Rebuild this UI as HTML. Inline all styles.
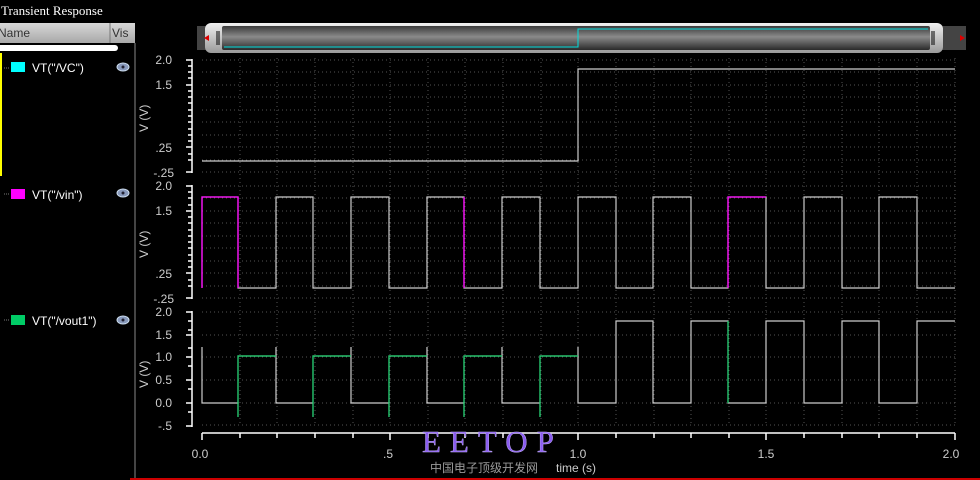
<!DOCTYPE html>
<html><head><style>
body{margin:0;background:#000;width:980px;height:480px;overflow:hidden;font-family:"Liberation Sans","Noto Sans CJK SC",sans-serif}
</style></head><body>
<svg width="980" height="480" xmlns="http://www.w3.org/2000/svg" style="position:absolute;left:0;top:0">
<defs>
<linearGradient id="hd" x1="0" y1="0" x2="0" y2="1"><stop offset="0" stop-color="#d8d8d8"/><stop offset="1" stop-color="#a8a8a8"/></linearGradient>
<linearGradient id="sb" x1="0" y1="0" x2="0" y2="1"><stop offset="0" stop-color="#3a3a3a"/><stop offset="0.45" stop-color="#8a8a8a"/><stop offset="1" stop-color="#2a2a2a"/></linearGradient>
<linearGradient id="sf" x1="0" y1="0" x2="0" y2="1"><stop offset="0" stop-color="#f0f0f0"/><stop offset="1" stop-color="#9a9a9a"/></linearGradient>
</defs>
<text x="1" y="15" fill="#fff" font-family="Liberation Serif,serif" font-size="13">Transient Response</text>
<rect x="0" y="23" width="135" height="20" fill="url(#hd)"/>
<line x1="110" y1="23" x2="110" y2="43" stroke="#777"/>
<text x="-2" y="37" fill="#333" font-size="12">Name</text>
<text x="112" y="37" fill="#333" font-size="12">Vis</text>
<rect x="-4" y="45" width="122" height="6" rx="3" fill="#fff"/>
<line x1="1" y1="53" x2="1" y2="176" stroke="#ff0" stroke-width="2"/>
<line x1="135" y1="43" x2="135" y2="480" stroke="#888"/>
<g font-size="12" fill="#fff">
<line x1="4" y1="68" x2="10" y2="68" stroke="#777" stroke-dasharray="1,1"/><rect x="11" y="62" width="14" height="10" fill="#0ff"/><text x="32" y="72">VT("/VC")</text>
<line x1="4" y1="194" x2="10" y2="194" stroke="#777" stroke-dasharray="1,1"/><rect x="11" y="189" width="14" height="10" fill="#f0f"/><text x="32" y="199">VT("/vin")</text>
<line x1="4" y1="320" x2="10" y2="320" stroke="#777" stroke-dasharray="1,1"/><rect x="11" y="315" width="14" height="10" fill="#0c6"/><text x="32" y="325">VT("/vout1")</text>
</g>
<g fill="#8899bb" stroke="#cde"><ellipse cx="123" cy="67" rx="6" ry="4"/><ellipse cx="123" cy="193" rx="6" ry="4"/><ellipse cx="123" cy="320" rx="6" ry="4"/></g>
<g fill="#223"><circle cx="123" cy="67" r="1.5"/><circle cx="123" cy="193" r="1.5"/><circle cx="123" cy="320" r="1.5"/></g>
<!-- scrollbar -->
<rect x="197" y="26" width="769" height="24" fill="#444"/>
<rect x="205" y="23" width="738" height="30" rx="6" fill="url(#sf)"/>
<rect x="222" y="26" width="708" height="24" rx="2" fill="url(#sb)"/>
<polyline points="224,47 578,47 578,29 928,29" fill="none" stroke="#0dd"/>
<polygon points="204,38 209,35 209,41" fill="#d00"/><polygon points="965,38 960,35 960,41" fill="#d00"/>
<g stroke="#000"><line x1="217" y1="31" x2="217" y2="45"/><line x1="219" y1="31" x2="219" y2="45"/><line x1="932" y1="31" x2="932" y2="45"/><line x1="934" y1="31" x2="934" y2="45"/></g>
<!-- grids -->
<g stroke="#555" stroke-dasharray="1,3">
<path d="M202 60H955M202 72H955M202 85H955M202 97H955M202 110H955M202 122H955M202 135H955M202 147H955M202 160H955M202 172H955"/>
<path d="M202 186H955M202 198H955M202 211H955M202 223H955M202 236H955M202 248H955M202 261H955M202 273H955M202 286H955M202 298H955"/>
<path d="M202 312H955M202 335H955M202 357H955M202 380H955M202 403H955M202 425H955"/>
<path d="M240 58V426M277 58V426M315 58V426M353 58V426M390 58V426M428 58V426M465 58V426M503 58V426M541 58V426M578 58V426M616 58V426M654 58V426M691 58V426M729 58V426M766 58V426M804 58V426M842 58V426M879 58V426M917 58V426M955 58V426"/>
</g>
<!-- y rulers -->
<g stroke="#fff" stroke-width="1.5">
<path d="M192 59V173M186 60H192M188 66H192M188 72H192M188 78H192M186 85H192M188 91H192M188 97H192M188 103H192M188 110H192M188 116H192M188 122H192M188 129H192M188 135H192M188 141H192M186 147H192M188 154H192M188 160H192M186 172H192"/>
<path d="M192 185V299M186 186H192M188 192H192M188 198H192M188 205H192M186 211H192M188 217H192M188 223H192M188 230H192M188 236H192M188 242H192M188 248H192M188 255H192M188 261H192M188 267H192M186 273H192M188 280H192M188 286H192M186 298H192"/>
<path d="M192 311V427M186 312H192M188 321H192M188 330H192M186 335H192M188 348H192M186 357H192M188 366H192M186 380H192M188 389H192M186 403H192M188 412H192M186 426H192"/>
<path d="M202 433H955M202 433V440M240 433V438M277 433V438M315 433V438M353 433V438M390 433V440M428 433V438M465 433V438M503 433V438M541 433V438M578 433V440M616 433V438M654 433V438M691 433V438M729 433V438M766 433V440M804 433V438M842 433V438M879 433V438M917 433V438M955 433V440"/>
</g>
<g fill="#ccc" font-size="12" text-anchor="end">
<text x="172" y="64">2.0</text><text x="172" y="89">1.5</text><text x="172" y="152">.25</text><text x="174" y="177">-.25</text>
<text x="172" y="190">2.0</text><text x="172" y="215">1.5</text><text x="172" y="278">.25</text><text x="174" y="303">-.25</text>
<text x="172" y="316">2.0</text><text x="172" y="339">1.5</text><text x="172" y="361">1.0</text><text x="172" y="384">0.5</text><text x="172" y="407">0.0</text><text x="172" y="430">-.5</text>
</g>
<g fill="#ccc" font-size="12" transform="rotate(-90)">
<text x="-132" y="148">V (V)</text><text x="-258" y="148">V (V)</text><text x="-388" y="148">V (V)</text>
</g>
<g fill="#ccc" font-size="12" text-anchor="middle">
<text x="200" y="458">0.0</text><text x="388" y="458">.5</text><text x="578" y="458">1.0</text><text x="766" y="458">1.5</text><text x="951" y="458">2.0</text>
</g>
<text x="556" y="472" fill="#ccc" font-size="12">time (s)</text>
<!-- traces -->
<g fill="none" stroke="#ccc" stroke-width="1.2">
<polyline points="202,161 578,161 578,69 955,69"/>
<polyline points="202,288 202,197 238,197 238,288 276,288 276,197 313,197 313,288 351,288 351,197 389,197 389,288 427,288 427,197 464,197 464,288 502,288 502,197 540,197 540,288 578,288 578,197 616,197 616,288 653,288 653,197 691,197 691,288 728,288 728,197 766,197 766,288 804,288 804,197 842,197 842,288 879,288 879,197 917,197 917,288 955,288"/>
<polyline points="202,347 202,403 238,403 238,417 238,356 276,356 276,347 276,403 313,403 313,417 313,356 351,356 351,347 351,403 389,403 389,417 389,356 427,356 427,347 427,403 464,403 464,417 464,356 502,356 502,347 502,403 540,403 540,417 540,356 578,356 578,347 578,403 616,403 616,321 653,321 653,403 691,403 691,321 728,321 728,403 766,403 766,321 804,321 804,403 842,403 842,321 879,321 879,403 917,403 917,321 955,321"/>
</g>
<g fill="none" stroke="#f0f" stroke-width="1.3">
<polyline points="202,288 202,197 238,197 238,288"/><polyline points="464,197 464,288"/><polyline points="728,288 728,197 766,197"/>
</g>
<g fill="none" stroke="#1c6" stroke-width="1.2">
<polyline points="238,417 238,356 276,356"/><polyline points="313,417 313,356 351,356"/><polyline points="389,417 389,356 427,356"/><polyline points="464,417 464,356 502,356"/><polyline points="540,417 540,356 578,356"/><polyline points="728,321 728,403"/>
</g>
<text x="422" y="452" fill="#8a5cf0" stroke="#c9b6ff" stroke-width="0.4" font-family="Liberation Serif,serif" font-size="31" letter-spacing="9">EETOP</text>
<text x="430" y="472" fill="#999" font-size="12">中国电子顶级开发网</text>
<line x1="130" y1="479" x2="980" y2="479" stroke="#c00" stroke-width="2"/>
</svg>
</body></html>
